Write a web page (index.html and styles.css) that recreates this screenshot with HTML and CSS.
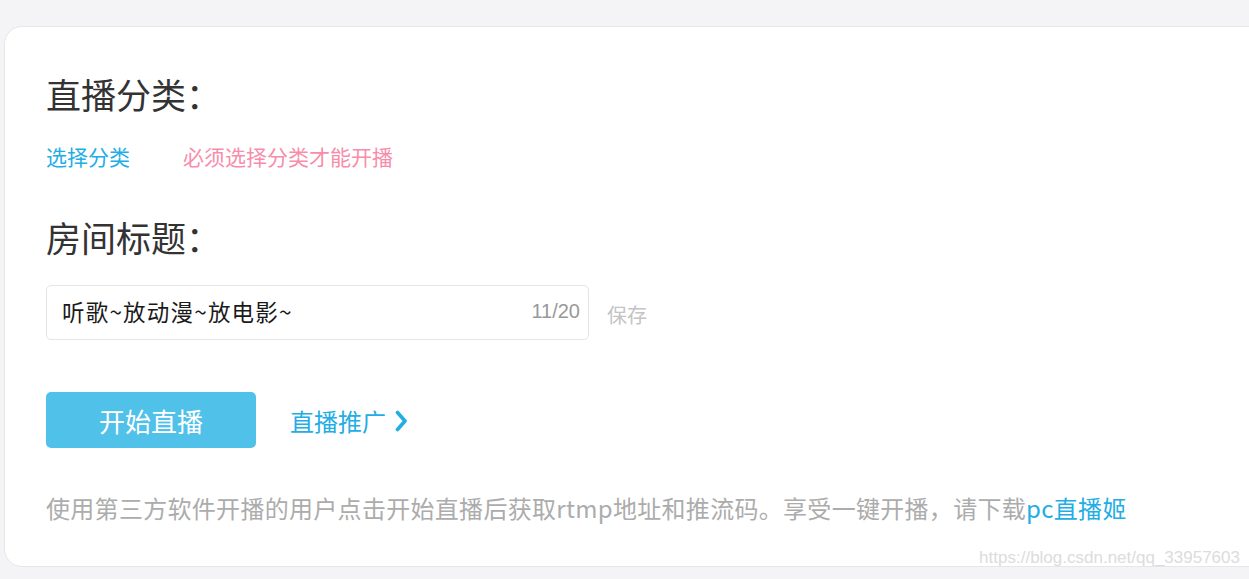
FILE: index.html
```html
<!DOCTYPE html>
<html lang="zh-CN">
<head>
    <meta charset="UTF-8">
    <meta name="viewport" content="width=device-width, initial-scale=1.0">
    <title>我的直播间</title>
    <link rel="stylesheet" href="styles.css">
</head>
<body>
    <div class="card">
        <h2 class="section-title">直播分类：</h2>
        <div class="category-row">
            <a class="link" href="#">选择分类</a>
            <span class="warn">必须选择分类才能开播</span>
        </div>

        <h2 class="section-title title-gap">房间标题：</h2>
        <div class="title-row">
            <div class="title-box">
                <span class="title-text">听歌~放动漫~放电影~</span>
                <span class="counter">11/20</span>
            </div>
            <span class="save">保存</span>
        </div>

        <div class="action-row">
            <button class="start-btn">开始直播</button>
            <a class="promo" href="#">直播推广
                <svg class="chevron" width="13" height="22" viewBox="0 0 13 22">
                    <polyline points="2.5,2.5 10,11 2.5,19.5" fill="none" stroke="#23ade5" stroke-width="3.6" stroke-linecap="round" stroke-linejoin="round"/>
                </svg>
            </a>
        </div>

        <p class="note">使用第三方软件开播的用户点击开始直播后获取rtmp地址和推流码。享受一键开播，请下载<a class="note-link" href="#">pc直播姬</a></p>
    </div>

    <div class="watermark">https://blog.csdn.net/qq_33957603</div>
</body>
</html>
```

FILE: styles.css
```css
/* Reset */
* {
    margin: 0;
    padding: 0;
    box-sizing: border-box;
}

body {
    font-family: "Noto Sans CJK SC", "Noto Sans", sans-serif;
    background: #f4f4f6;
    height: 579px;
    overflow: hidden;
    position: relative;
}

a {
    text-decoration: none;
}

/* Main card */
.card {
    margin: 26px 0 0 4px;
    width: 1300px;
    height: 541px;
    background: #fff;
    border: 1px solid #e6e6e8;
    border-radius: 18px;
    padding: 49px 0 0 41px;
}

/* Section headers */
.section-title {
    font-size: 35px;
    line-height: 35px;
    font-weight: normal;
    color: #333;
}

.title-gap {
    margin-top: 52px;
}

/* Category */
.category-row {
    display: flex;
    gap: 53px;
    margin-top: 35px;
    font-size: 21px;
    line-height: 21px;
}

.link {
    color: #23ade5;
}

.warn {
    color: #f78dab;
}

/* Room title */
.title-row {
    display: flex;
    align-items: center;
    gap: 18px;
    margin-top: 31px;
}

.title-box {
    width: 543px;
    height: 55px;
    border: 1px solid #e5e5e5;
    border-radius: 5px;
    display: flex;
    align-items: center;
    justify-content: space-between;
    padding: 0 8px 0 15px;
}

.title-text {
    font-size: 22.5px;
    letter-spacing: 1.2px;
    color: #1a1a1a;
    margin-top: -3px;
}

.counter {
    font-family: "Liberation Sans", Arial, sans-serif;
    font-size: 20px;
    color: #999;
    margin-top: -3px;
}

.save {
    font-size: 20px;
    color: #c4c4c4;
    margin-top: 4px;
}

/* Actions */
.action-row {
    display: flex;
    align-items: center;
    gap: 34px;
    margin-top: 52px;
}

.start-btn {
    width: 210px;
    height: 56px;
    border: none;
    border-radius: 5px;
    background: #50c1e9;
    color: #fff;
    font-family: inherit;
    font-size: 26px;
    cursor: pointer;
}

.promo {
    display: flex;
    align-items: center;
    gap: 9px;
    font-size: 24px;
    color: #23ade5;
}

.chevron {
    margin-top: 1px;
}

/* Footer note */
.note {
    margin-top: 47px;
    font-size: 24px;
    line-height: 26px;
    letter-spacing: 0.3px;
    color: #acacac;
}

.note-link {
    color: #23ade5;
}

/* Blog watermark */
.watermark {
    position: absolute;
    right: 9px;
    top: 548px;
    font-family: "Liberation Sans", Arial, sans-serif;
    font-size: 17px;
    color: #dcdcdc;
}
```
